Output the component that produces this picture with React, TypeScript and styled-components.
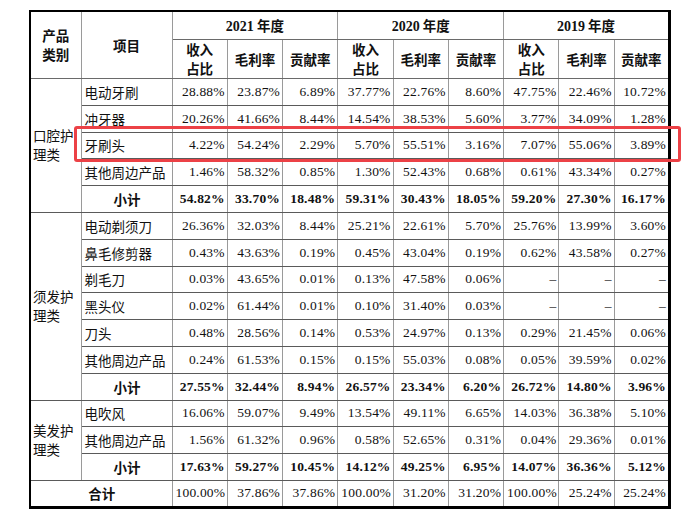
import React from 'react';
import styled, { createGlobalStyle } from 'styled-components';

const GlobalStyle = createGlobalStyle`
  html, body {
    margin: 0;
    padding: 0;
    background: #fff;
  }
`;

const Page = styled.div`
  position: relative;
  width: 693px;
  height: 516px;
  padding: 10px 0 0 29px;
  box-sizing: border-box;
  font-family: "Liberation Serif", "Noto Sans CJK SC", serif;
  color: #111;
`;

const Table = styled.table`
  border-collapse: collapse;
  table-layout: fixed;
  width: 642px;
  border-top: 2px solid #000;
  border-left: 2px solid #000;
  border-right: 3px solid #000;
  border-bottom: 3px solid #000;
`;

const HeadCell = styled.th<{ $h?: number }>`
  height: ${(p) => p.$h ?? 27}px;
  padding: 0;
  border-left: 1px solid #9a9a9a;
  border-right: 1px solid #9a9a9a;
  border-top: 1px solid #6a6a6a;
  border-bottom: 1px solid #6a6a6a;
  font-family: "Noto Sans CJK SC", sans-serif;
  font-weight: 700;
  font-size: 13.5px;
  line-height: 19px;
  text-align: center;
  vertical-align: middle;
`;

const YearText = styled.span`
  font-family: "Liberation Serif", "Noto Sans CJK SC", serif;
  font-weight: 700;
  font-size: 14px;
`;

const Row = styled.tr`
  height: 26.8px;
`;

const Cell = styled.td<{ $bold?: boolean; $align?: string }>`
  padding: 0 2px 0 3px;
  border-left: 1px solid #9a9a9a;
  border-right: 1px solid #9a9a9a;
  border-top: 1px solid #5a5a5a;
  border-bottom: 1px solid #5a5a5a;
  font-size: 13.5px;
  font-weight: ${(p) => (p.$bold ? 700 : 400)};
  text-align: ${(p) => p.$align ?? 'right'};
  vertical-align: middle;
  white-space: nowrap;
  letter-spacing: 0.2px;
`;

const ItemCell = styled(Cell)`
  font-family: "Noto Sans CJK SC", sans-serif;
  padding-left: 3px;
  letter-spacing: 0;
`;

const CategoryCell = styled.td`
  padding: 0 2px 0 2px;
  border-left: 1px solid #9a9a9a;
  border-right: 1px solid #9a9a9a;
  border-top: 1px solid #5a5a5a;
  border-bottom: 1px solid #5a5a5a;
  font-family: "Noto Sans CJK SC", sans-serif;
  font-size: 13.5px;
  line-height: 19px;
  text-align: left;
  vertical-align: middle;
  white-space: normal;
`;

const Highlight = styled.div`
  position: absolute;
  left: 74px;
  top: 126px;
  width: 607px;
  height: 36px;
  box-sizing: border-box;
  border: 3px solid #ec4146;
  border-radius: 3px;
  pointer-events: none;
`;

type Line = { name: string; values: string[]; subtotal?: boolean };
type Group = { label: string[]; lines: Line[] };

const groups: Group[] = [
  {
    label: ['口腔护', '理类'],
    lines: [
      { name: '电动牙刷', values: ['28.88', '23.87', '6.89', '37.77', '22.76', '8.60', '47.75', '22.46', '10.72'] },
      { name: '冲牙器', values: ['20.26', '41.66', '8.44', '14.54', '38.53', '5.60', '3.77', '34.09', '1.28'] },
      { name: '牙刷头', values: ['4.22', '54.24', '2.29', '5.70', '55.51', '3.16', '7.07', '55.06', '3.89'] },
      { name: '其他周边产品', values: ['1.46', '58.32', '0.85', '1.30', '52.43', '0.68', '0.61', '43.34', '0.27'] },
      { name: '小计', subtotal: true, values: ['54.82', '33.70', '18.48', '59.31', '30.43', '18.05', '59.20', '27.30', '16.17'] },
    ],
  },
  {
    label: ['须发护', '理类'],
    lines: [
      { name: '电动剃须刀', values: ['26.36', '32.03', '8.44', '25.21', '22.61', '5.70', '25.76', '13.99', '3.60'] },
      { name: '鼻毛修剪器', values: ['0.43', '43.63', '0.19', '0.45', '43.04', '0.19', '0.62', '43.58', '0.27'] },
      { name: '剃毛刀', values: ['0.03', '43.65', '0.01', '0.13', '47.58', '0.06', '', '', ''] },
      { name: '黑头仪', values: ['0.02', '61.44', '0.01', '0.10', '31.40', '0.03', '', '', ''] },
      { name: '刀头', values: ['0.48', '28.56', '0.14', '0.53', '24.97', '0.13', '0.29', '21.45', '0.06'] },
      { name: '其他周边产品', values: ['0.24', '61.53', '0.15', '0.15', '55.03', '0.08', '0.05', '39.59', '0.02'] },
      { name: '小计', subtotal: true, values: ['27.55', '32.44', '8.94', '26.57', '23.34', '6.20', '26.72', '14.80', '3.96'] },
    ],
  },
  {
    label: ['美发护', '理类'],
    lines: [
      { name: '电吹风', values: ['16.06', '59.07', '9.49', '13.54', '49.11', '6.65', '14.03', '36.38', '5.10'] },
      { name: '其他周边产品', values: ['1.56', '61.32', '0.96', '0.58', '52.65', '0.31', '0.04', '29.36', '0.01'] },
      { name: '小计', subtotal: true, values: ['17.63', '59.27', '10.45', '14.12', '49.25', '6.95', '14.07', '36.36', '5.12'] },
    ],
  },
];

const total = ['100.00', '37.86', '37.86', '100.00', '31.20', '31.20', '100.00', '25.24', '25.24'];
const years = ['2021', '2020', '2019'];

const fmt = (v: string) => (v ? `${v}%` : '–');

export default function App() {
  return (
    <Page>
      <GlobalStyle />
      <Table>
        <colgroup>
          <col style={{ width: 51 }} />
          <col style={{ width: 91 }} />
          {Array.from({ length: 9 }).map((_, i) => (
            <col key={i} />
          ))}
        </colgroup>
        <thead>
          <tr>
            <HeadCell rowSpan={2}>
              产品
              <br />
              类别
            </HeadCell>
            <HeadCell rowSpan={2}>项目</HeadCell>
            {years.map((y) => (
              <HeadCell key={y} colSpan={3}>
                <YearText>{y}</YearText> 年度
              </HeadCell>
            ))}
          </tr>
          <tr>
            {years.map((y) => (
              <React.Fragment key={y}>
                <HeadCell $h={38}>
                  收入
                  <br />
                  占比
                </HeadCell>
                <HeadCell $h={38}>毛利率</HeadCell>
                <HeadCell $h={38}>贡献率</HeadCell>
              </React.Fragment>
            ))}
          </tr>
        </thead>
        <tbody>
          {groups.map((g) =>
            g.lines.map((line, i) => (
              <Row key={g.label.join('') + i}>
                {i === 0 && (
                  <CategoryCell rowSpan={g.lines.length}>
                    {g.label[0]}
                    <br />
                    {g.label[1]}
                  </CategoryCell>
                )}
                <ItemCell $align={line.subtotal ? 'center' : 'left'} $bold={line.subtotal}>
                  {line.name}
                </ItemCell>
                {line.values.map((v, j) => (
                  <Cell key={j} $bold={line.subtotal}>
                    {fmt(v)}
                  </Cell>
                ))}
              </Row>
            ))
          )}
          <Row>
            <ItemCell colSpan={2} $align="center" $bold>
              合计
            </ItemCell>
            {total.map((v, j) => (
              <Cell key={j}>{fmt(v)}</Cell>
            ))}
          </Row>
        </tbody>
      </Table>
      <Highlight />
    </Page>
  );
}
